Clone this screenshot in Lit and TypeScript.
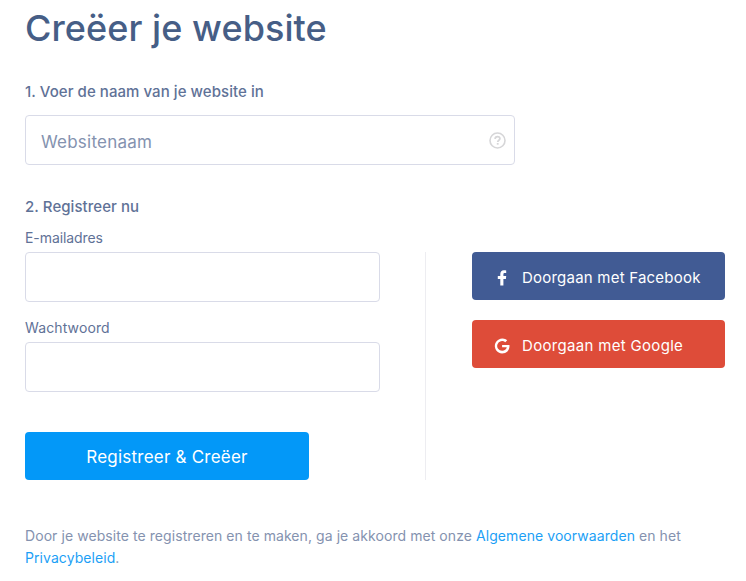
import { LitElement, html, css, svg } from "lit";
import { customElement } from "lit/decorators.js";

const helpIcon = html`<svg class="help" viewBox="0 0 17 17" width="17" height="17" fill="none" stroke="#d6d6d8">
  <circle cx="8.5" cy="8.5" r="7.5" stroke-width="1.6" />
  <path d="M6.100 7c0-1.500 1-2.400 2.400-2.400s2.400.8 2.400 2.100c0 1.500-2.200 1.600-2.200 3.400" stroke-width="1.700" />
  <path d="M7.800 11h1.800v1.700H7.800z" fill="#d6d6d8" stroke="none" />
</svg>`;

const facebookPath = svg`<path d="M6.300 15.500V9H3.800V6.100h2.500V4.100C6.300 1.700 7.700.3 9.900.3c1.100 0 1.900.1 2.300.2v2.600h-1.500c-1.100 0-1.300.6-1.300 1.400v1.600h2.800L11.900 9H9.400v6.500z" />`;
const googlePath = svg`<path d="M8.100 6.900v2.400h4.700c-.5 2.100-2.200 3.500-4.700 3.500a4.900 4.900 0 1 1 3.200-8.600l1.900-1.900A7.500 7.500 0 1 0 8.100 15.500c4.400 0 7.400-3.100 7.400-7.500 0-.4 0-.8-.1-1.100z" />`;

@customElement("app-root")
export class AppRoot extends LitElement {
  static styles = css`
    :host {
      display: block;
      box-sizing: border-box;
      height: 581px;
      overflow: hidden;
      padding: 3px 21px 0 25px;
      background: #fff;
      color: #5f7297;
      font-family: Inter, "Liberation Sans", sans-serif;
    }
    h1 {
      margin: 0;
      height: 50px;
      line-height: 50px;
      font-size: 36px;
      font-weight: 500;
      letter-spacing: 0.07px;
      color: #465e86;
    }
    h2 {
      margin: 0;
      height: 20px;
      line-height: 22px;
      font-size: 15px;
      font-weight: 500;
      letter-spacing: 0.06px;
    }
    .site { margin-top: 28px; }
    .register { margin-top: 31px; }
    .field {
      display: flex;
      align-items: center;
      box-sizing: border-box;
      height: 50px;
      border: 1px solid #d9dbe8;
      border-radius: 4px;
      background: #fff;
    }
    .field input {
      flex: 1;
      min-width: 0;
      height: 100%;
      box-sizing: border-box;
      border: 0;
      outline: 0;
      padding: 3px 15px 0;
      background: none;
      font: 400 17px Inter, "Liberation Sans", sans-serif;
      letter-spacing: 0.22px;
      color: #465e86;
    }
    .field input::placeholder { color: #8492af; opacity: 1; }
    .name { width: 490px; margin-top: 14px; }
    .help { margin-right: 8px; }
    .columns {
      display: flex;
      height: 253px;
      margin-top: 11px;
    }
    form { width: 355px; }
    label {
      display: block;
      height: 20px;
      line-height: 22px;
      margin-bottom: 5px;
      font-size: 14px;
    }
    .email { letter-spacing: -0.08px; }
    .password { margin-top: 15px; letter-spacing: 0.12px; }
    button {
      display: flex;
      align-items: center;
      border: 0;
      border-radius: 4px;
      height: 48px;
      color: #fff;
      font-family: inherit;
    }
    .submit {
      justify-content: center;
      width: 284px;
      margin-top: 40px;
      padding: 2px 0 0;
      background: #0398f8;
      font-size: 17px;
      letter-spacing: 0.22px;
    }
    .social {
      display: flex;
      flex-direction: column;
      gap: 20px;
      box-sizing: border-box;
      margin: 25px 0 0 45px;
      padding-left: 46px;
      border-left: 1px solid #ededf1;
    }
    .social button {
      width: 253px;
      padding: 3px 0 0 22px;
      gap: 12px;
      font-size: 15px;
    }
    .facebook { background: #415b94; letter-spacing: 0.22px; }
    .social .google { background: #de4c39; letter-spacing: 0.32px; }
    .terms {
      margin: 45px 0 0;
      font-size: 14px;
      line-height: 22px;
      letter-spacing: 0.07px;
      color: #8492af;
    }
    .terms a { color: #1c9ff6; text-decoration: none; }
  `;

  render() {
    return html`
      <h1>Creëer je website</h1>
      <h2 class="site">1. Voer de naam van je website in</h2>
      <div class="field name">
        <input type="text" placeholder="Websitenaam" aria-label="Websitenaam" />${helpIcon}
      </div>
      <h2 class="register">2. Registreer nu</h2>
      <div class="columns">
        <form @submit=${(e: Event) => e.preventDefault()}>
          <label class="email" for="email">E-mailadres</label>
          <div class="field"><input id="email" type="email" /></div>
          <label class="password" for="password">Wachtwoord</label>
          <div class="field"><input id="password" type="password" /></div>
          <button class="submit">Registreer &amp; Creëer</button>
        </form>
        <div class="social">
          <button class="facebook">
            <svg viewBox="0 0 16 16" width="16" height="16" fill="#fff">${facebookPath}</svg>
            <span>Doorgaan met Facebook</span>
          </button>
          <button class="google">
            <svg viewBox="0 0 16 16" width="16" height="16" fill="#fff">${googlePath}</svg>
            <span>Doorgaan met Google</span>
          </button>
        </div>
      </div>
      <p class="terms">
        Door je website te registreren en te maken, ga je akkoord met onze
        <a href="#">Algemene voorwaarden</a> en het <br /><a href="#">Privacybeleid</a>.
      </p>
    `;
  }
}
